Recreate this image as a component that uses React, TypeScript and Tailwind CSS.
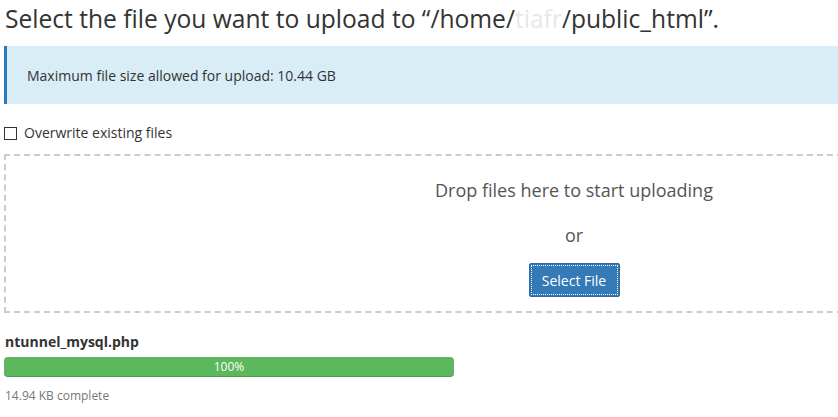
export default function App() {
  return (
    <main
      className="w-[838px] h-[417px] overflow-hidden bg-white text-[#333]"
      style={{ fontFamily: '"Open Sans", "Noto Sans", sans-serif' }}
    >
      <div className="w-[1144px] pl-[4px]">
        <h1 className="text-[24.6px] leading-[30px] pt-[4px] pl-[1px] text-[#333]">
          Select the file you want to upload to “/home/<span className="text-[#e8e8e8]">tiafr</span>/public_html”.
        </h1>

        <div className="mt-[12px] h-[58px] flex items-center bg-[#d9edf7] border-l-[3px] border-[#2a7bbf] pl-[20px] text-[14px] text-[#333]">
          Maximum file size allowed for upload: 10.44 GB
        </div>

        <label className="mt-[19px] flex items-center gap-[7px] text-[14px] leading-[20px] text-[#333]">
          <span className="w-[13px] h-[13px] border border-[#333] bg-white" />
          Overwrite existing files
        </label>

        <div className="mt-[11px] h-[159px] border-2 border-dashed border-[#ccc] flex flex-col items-center pt-[22px]">
          <p className="text-[18px] leading-[24px] text-[#555]">Drop files here to start uploading</p>
          <p className="mt-[21px] text-[18px] leading-[24px] text-[#555]">or</p>
          <button className="mt-[16px] w-[91px] h-[34px] bg-[#337ab7] border border-[#2e6da4] rounded-[2px] p-[2px]">
            <span className="flex items-center justify-center w-full h-full outline-1 outline-dotted outline-white text-[14px] text-white">
              Select File
            </span>
          </button>
        </div>

        <div className="mt-[19px] text-[14px] font-bold leading-[20px] text-[#333] pl-[1px]">ntunnel_mysql.php</div>
        <div className="mt-[5px] w-[450px] h-[20px] rounded-[4px] bg-[#5cb85c] flex items-center justify-center text-[12px] text-white shadow-[inset_0_-1px_0_rgba(0,0,0,0.15)]">
          100%
        </div>
        <div className="mt-[10px] text-[12px] leading-[18px] text-[#777] pl-[1px]">14.94 KB complete</div>
      </div>
    </main>
  );
}
